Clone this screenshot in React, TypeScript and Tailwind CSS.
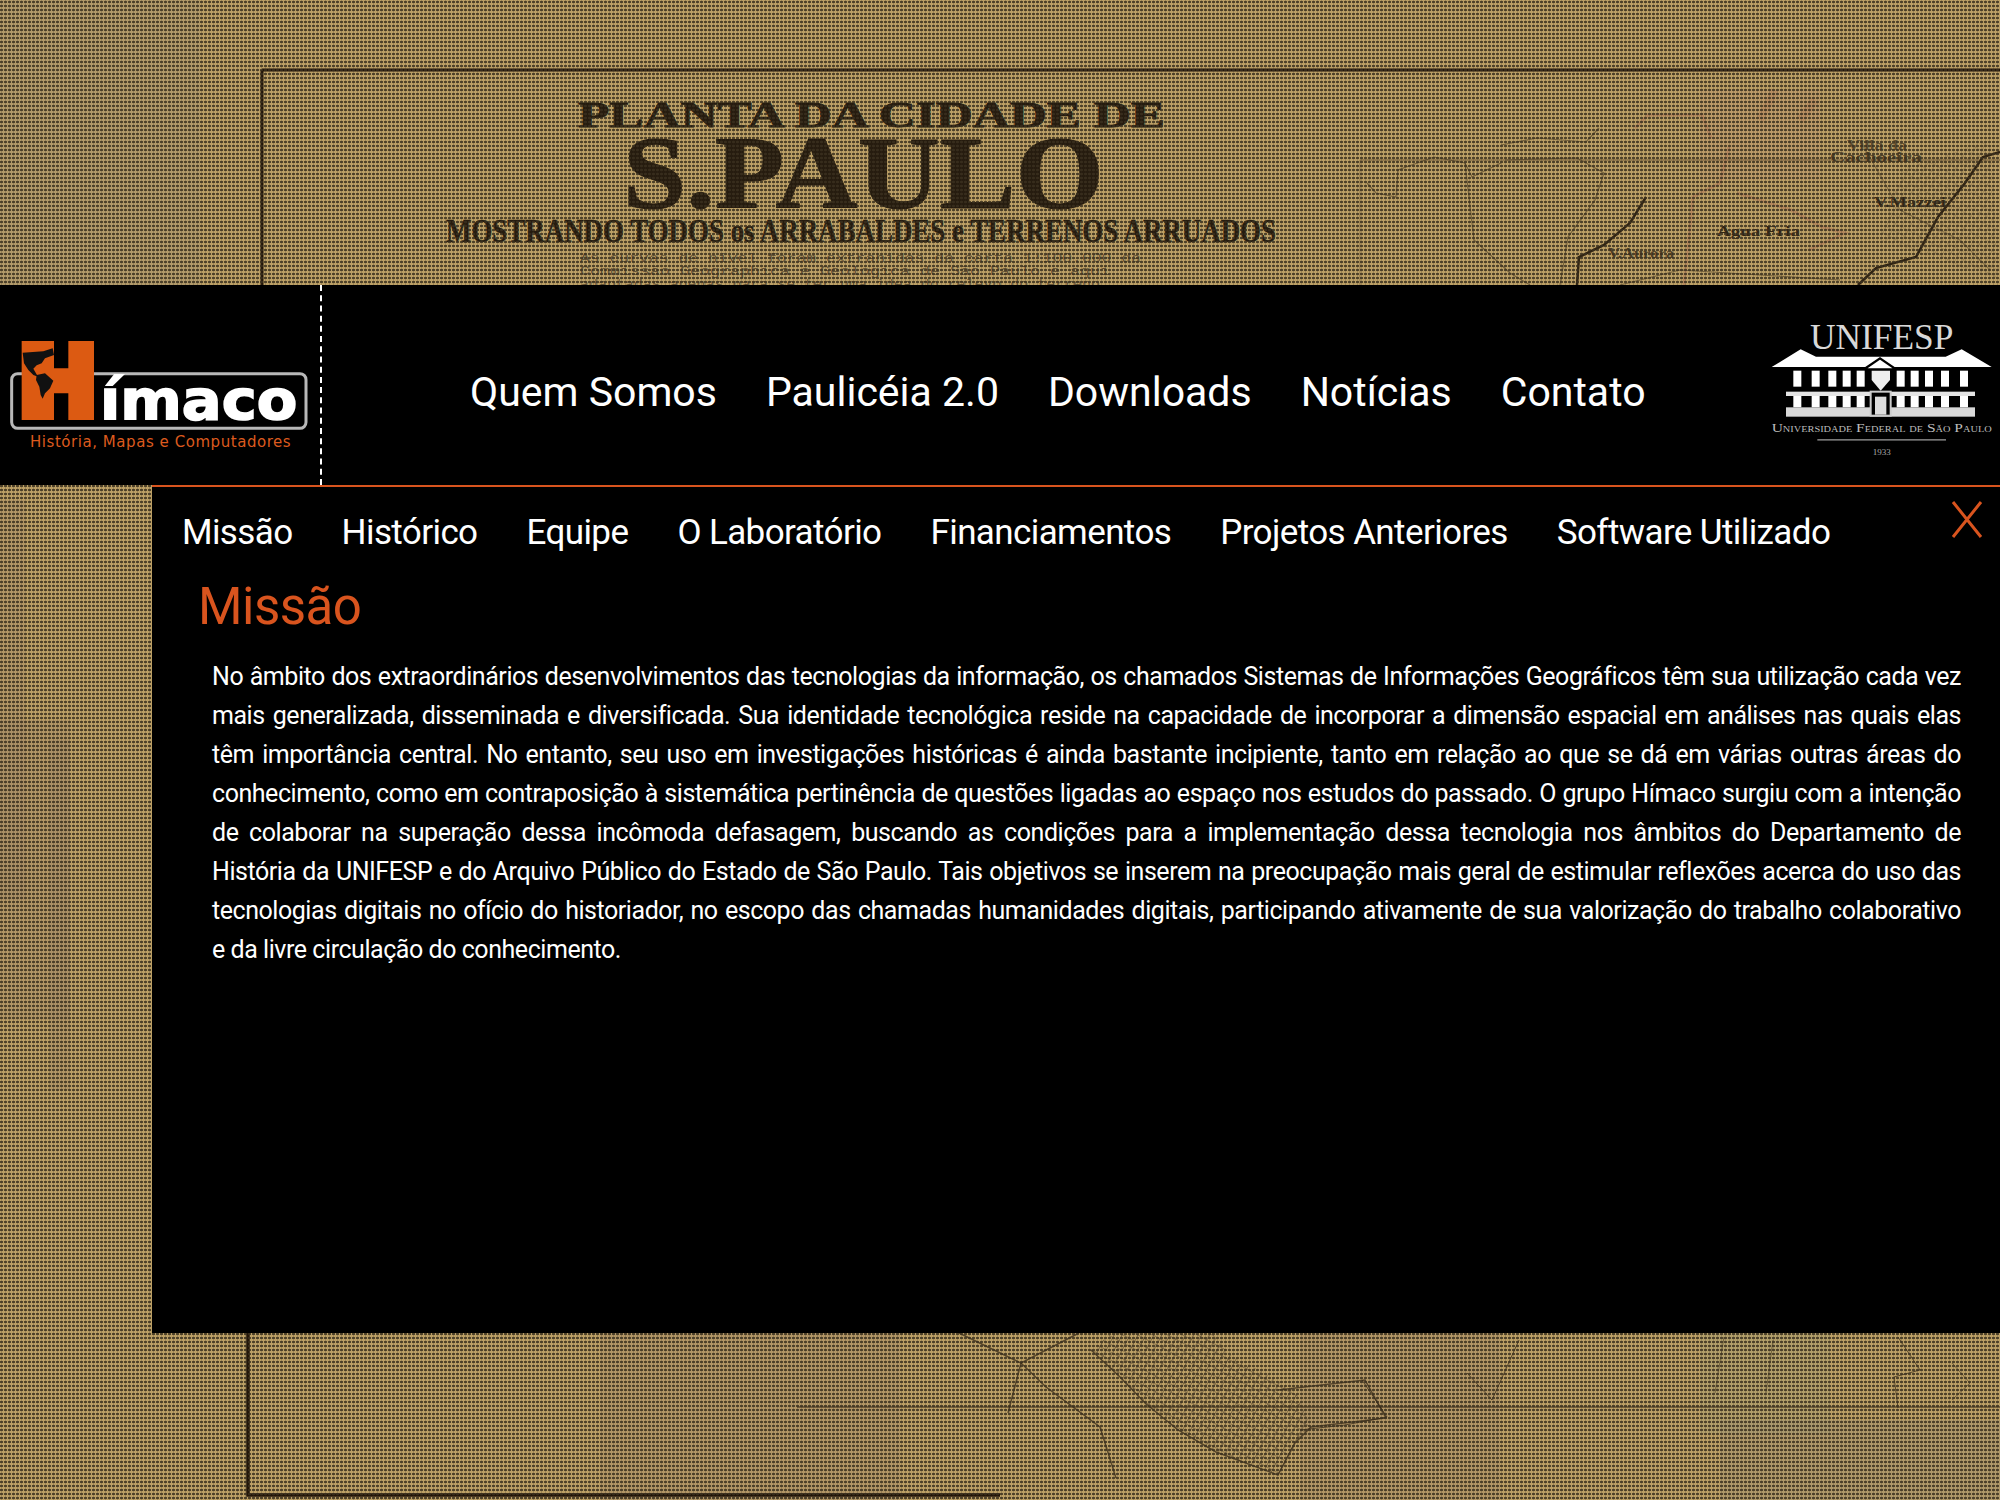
import React from 'react'

const topLinks = ['Quem Somos', 'Paulicéia 2.0', 'Downloads', 'Notícias', 'Contato']
const subLinks = ['Missão', 'Histórico', 'Equipe', 'O Laboratório', 'Financiamentos', 'Projetos Anteriores', 'Software Utilizado']

const lines = [
  'No âmbito dos extraordinários desenvolvimentos das tecnologias da informação, os chamados Sistemas de Informações Geográficos têm sua utilização cada vez',
  'mais generalizada, disseminada e diversificada. Sua identidade tecnológica reside na capacidade de incorporar a dimensão espacial em análises nas quais elas',
  'têm importância central. No entanto, seu uso em investigações históricas é ainda bastante incipiente, tanto em relação ao que se dá em várias outras áreas do',
  'conhecimento, como em contraposição à sistemática pertinência de questões ligadas ao espaço nos estudos do passado. O grupo Hímaco surgiu com a intenção',
  'de colaborar na superação dessa incômoda defasagem, buscando as condições para a implementação dessa tecnologia nos âmbitos do Departamento de',
  'História da UNIFESP e do Arquivo Público do Estado de São Paulo. Tais objetivos se inserem na preocupação mais geral de estimular reflexões acerca do uso das',
  'tecnologias digitais no ofício do historiador, no escopo das chamadas humanidades digitais, participando ativamente de sua valorização do trabalho colaborativo',
]

const MapBackground = () => (
  <svg className="absolute inset-0" width="2000" height="1500" viewBox="0 0 2000 1500">
    <defs>
      <pattern id="dots" width="4" height="4" patternUnits="userSpaceOnUse">
        <rect x="0" y="0" width="4" height="4" fill="#4a3e2c" fillOpacity="0.1" />
        <rect x="1" y="0" width="1" height="4" fill="#3a2f1e" fillOpacity="0.25" />
        <rect x="0" y="1" width="3" height="2" fill="#3a2f1e" fillOpacity="0.8" />
      </pattern>
      <pattern id="hatch" width="7" height="7" patternUnits="userSpaceOnUse" patternTransform="rotate(28)">
        <path d="M0 0H7M0 0V7" stroke="#3d3020" strokeWidth="1.2" />
      </pattern>
    </defs>
    <rect width="2000" height="1500" fill="#c8aa6c" />

    {/* stains of the old paper */}
    <g fill="#a88c6c" fillOpacity="0.35">
      <rect x="0" y="500" width="25" height="400" />
      <rect x="0" y="720" width="70" height="300" />
      <rect x="50" y="740" width="20" height="350" />
      <rect x="1300" y="1333" width="200" height="167" />
      <rect x="1700" y="1333" width="130" height="100" fill="#a8a878" />
      <rect x="1720" y="1420" width="300" height="80" fill="#a4987c" />
      <rect x="600" y="1333" width="300" height="167" />
      <rect x="0" y="0" width="200" height="285" fill="#a89a78" />
      <rect x="1700" y="90" width="120" height="90" fill="#c89a72" />
    </g>

    {/* frame of the map */}
    <g fill="none" stroke="#1f1206">
      <path d="M262 70H2000" strokeWidth="3" />
      <path d="M262 70V285" strokeWidth="3" />
      <path d="M248 1333V1495H1000" strokeWidth="3.5" />
      <path d="M797 1407H2000" strokeWidth="1.5" strokeOpacity="0.6" />
      <path d="M1360 160H2000" strokeWidth="1" strokeOpacity="0.5" />
      <path d="M1360 160V285" strokeWidth="1" strokeOpacity="0.3" />
    </g>

    {/* title */}
    <g fill="#22180c" stroke="#22180c" fontFamily="'Liberation Serif', serif" fontWeight="700">
      <text x="578" y="127" fontSize="36" strokeWidth="0.8" textLength="587" lengthAdjust="spacingAndGlyphs">PLANTA DA CIDADE DE</text>
      <text x="623" y="208" fontSize="104" strokeWidth="1" textLength="481" lengthAdjust="spacingAndGlyphs">S.PAULO</text>
      <text x="446" y="242" fontSize="33" strokeWidth="0.4" textLength="830" lengthAdjust="spacingAndGlyphs">MOSTRANDO TODOS os ARRABALDES e TERRENOS ARRUADOS</text>
    </g>
    <g fill="#4a3c28" fillOpacity="0.75" fontFamily="'Liberation Mono', monospace" fontSize="13">
      <text x="580" y="262" textLength="561" lengthAdjust="spacingAndGlyphs">As curvas de nivel foram extrahidas da carta 1:100.000 da</text>
      <text x="580" y="275" textLength="530" lengthAdjust="spacingAndGlyphs">Commissão Geographica e Geologica de São Paulo e aqui</text>
      <text x="580" y="288" textLength="520" lengthAdjust="spacingAndGlyphs">adaptadas apenas para se ter uma idea do relevo do terreno</text>
    </g>

    {/* upper right of the map */}
    <g fill="none" stroke="#2e2110">
      <path d="M1577 285L1579 257L1604 245L1630 223L1646 197" strokeWidth="2.5" />
      <path d="M1858 285L1876 268L1916 257L1938 217L1965 183L1983 157L2000 152" strokeWidth="2.5" />
      <g strokeWidth="1.2" strokeOpacity="0.5">
        <path d="M1367 183L1376 193L1396 197L1398 170L1434 157L1465 163L1472 177L1501 163" />
        <path d="M1501 145L1537 138L1586 142L1599 128" />
        <path d="M1505 160L1577 158L1604 173L1595 200L1568 237L1560 285" />
        <path d="M1465 163L1474 240L1510 273L1530 285" />
        <path d="M1620 285L1680 270L1760 275L1840 280" />
        <path d="M1860 140L1900 210L1960 240L1990 270" strokeOpacity="0.35" />
      </g>
      <g strokeWidth="3" stroke="#b97f5c" strokeOpacity="0.6">
        <path d="M1635 128L1648 115L1702 115L1711 138" />
        <path d="M1729 147L1720 183L1693 197L1684 285" />
        <path d="M1737 193L1791 210L1822 227L1845 233L1809 250" />
        <path d="M1760 120L1775 90M1800 120L1815 100" strokeWidth="8" strokeOpacity="0.35" />
      </g>
    </g>
    <g fill="#2f2412" fontFamily="'Liberation Serif', serif" fontSize="15" fontWeight="700">
      <text x="1847" y="150" textLength="60" lengthAdjust="spacingAndGlyphs" fillOpacity="0.7">Villa da</text>
      <text x="1830" y="162" textLength="92" lengthAdjust="spacingAndGlyphs" fillOpacity="0.8">Cachoeira</text>
      <text x="1874" y="207" textLength="72" lengthAdjust="spacingAndGlyphs">V.Mazzei</text>
      <text x="1717" y="236" textLength="83" lengthAdjust="spacingAndGlyphs">Agua Fria</text>
      <text x="1608" y="258" textLength="66" lengthAdjust="spacingAndGlyphs" fillOpacity="0.8">V.Aurora</text>
    </g>
    <path d="M1900 170L1990 140L2000 280L1880 240Z" fill="url(#hatch)" fillOpacity="0.3" />

    {/* lower part of the map */}
    <path d="M1091 1350L1120 1377L1145 1403L1178 1430L1216 1452L1278 1475L1295 1443L1311 1427L1295 1390L1228 1353L1212 1333H1112Z" fill="url(#hatch)" fillOpacity="0.75" />
    <g fill="none" stroke="#2e2110" strokeWidth="1.5" strokeOpacity="0.7">
      <path d="M959 1333L1021 1363L1046 1387L1100 1427L1116 1478" />
      <path d="M1079 1333L1021 1363L1008 1413" />
      <path d="M1091 1350L1120 1377L1145 1403L1178 1430L1216 1452L1278 1475L1295 1443L1311 1427L1386 1418L1365 1380L1278 1390" />
      <path d="M1300 1430L1345 1425L1387 1417L1362 1380" strokeWidth="1" />
      <path d="M1467 1373L1492 1400L1519 1340" strokeWidth="1" />
      <path d="M1724 1337L1715 1393M1773 1340L1766 1393" strokeWidth="1" strokeOpacity="0.5" />
      <path d="M1898 1337L1920 1370L1894 1377L1898 1408" strokeWidth="1" />
      <path d="M1952 1363L1970 1383L1952 1400" strokeWidth="1" strokeOpacity="0.5" />
    </g>

    {/* printed dot screen */}
    <rect width="2000" height="1500" fill="url(#dots)" />
  </svg>
)

const HimacoLogo = () => (
  <svg width="320" height="200" viewBox="0 15 960 600" className="shrink-0">
    <rect x="35" y="281" width="883" height="164" rx="18" fill="#000" stroke="#b8b8b8" strokeWidth="9" />
    <path d="M65 183H162V265H205V183H282V420H205V340H162V420H65Z" fill="#dc5a12" />
    <path d="M68 218L130 214L158 205L162 225L135 235L125 250L110 256L100 266L114 290L100 285L85 270L72 250Z" fill="#111" />
    <path d="M110 285L135 280L160 302L150 325L135 340L128 356L122 345L118 320L108 300Z" fill="#111" />
    <text x="300" y="418" fill="#fff" stroke="#fff" strokeWidth="5" fontFamily="'DejaVu Sans', sans-serif" fontWeight="700" fontSize="168" textLength="592" lengthAdjust="spacingAndGlyphs">ímaco</text>
    <text x="90" y="501" fill="#dc5a1e" fontFamily="'DejaVu Sans', sans-serif" fontSize="45" textLength="782">História, Mapas e Computadores</text>
  </svg>
)

const UnifespLogo = () => {
  const bars = [160, 215, 265, 308, 350, 470, 512, 555, 603, 660]
  return (
    <svg width="260" height="180" viewBox="0 0 780 540" className="shrink-0">
      <text x="210" y="178" fill="#d8d8d8" fontFamily="'Liberation Serif', serif" fontSize="105" textLength="430" lengthAdjust="spacingAndGlyphs">UNIFESP</text>
      <path d="M95 231L182 178L228 200H617L665 178L755 231Z" fill="#fff" />
      <path d="M372 238L420 205L468 238Z" fill="#fff" stroke="#000" strokeWidth="7" />
      {bars.map((x) => (
        <rect key={x} x={x} y="242" width="24" height="48" fill="#fff" />
      ))}
      <path d="M395 242H450V270L422 302L395 270Z" fill="#eee" />
      <rect x="138" y="305" width="567" height="13" fill="#e4e4e4" />
      {bars.map((x) => (
        <rect key={x} x={x} y="318" width="24" height="34" fill="#fff" />
      ))}
      <rect x="138" y="352" width="567" height="28" fill="#d8d8d8" />
      <rect x="392" y="305" width="60" height="72" fill="#000" stroke="#ccc" strokeWidth="6" />
      <rect x="405" y="320" width="34" height="54" fill="#ddd" />
      <text x="95" y="426" fill="#bdbdbd" fontFamily="'Liberation Serif', serif" fontSize="36" textLength="660" lengthAdjust="spacingAndGlyphs" style={{ fontVariant: 'small-caps' }}>Universidade Federal de São Paulo</text>
      <rect x="232" y="447" width="386" height="5" fill="#777" />
      <text x="398" y="494" fill="#aaa" fontFamily="'Liberation Serif', serif" fontSize="26" textLength="54" lengthAdjust="spacingAndGlyphs">1933</text>
    </svg>
  )
}

export default function App() {
  return (
    <div className="relative h-[1500px] w-[2000px] overflow-hidden font-['Roboto',sans-serif] text-white">
      <MapBackground />

      <div className="relative pt-[285px]">
        <header className="flex h-[200px] items-start bg-black">
          <div className="h-full border-r-2 border-dashed border-white w-[322px]">
            <HimacoLogo />
          </div>
          <nav className="ml-[148px] mt-[80px] flex gap-[49px] text-[41px] leading-[54px]">
            {topLinks.map((link) => (
              <a key={link}>{link}</a>
            ))}
          </nav>
          <div className="ml-auto mt-[5px]">
            <UnifespLogo />
          </div>
        </header>

        <main className="relative ml-[152px] h-[848px] border-t-2 border-[#d9541e] bg-black">
          <nav className="flex gap-[49px] pl-[30px] pt-[23px] text-[35px] leading-[46px] tracking-[-0.6px]">
            {subLinks.map((link) => (
              <a key={link}>{link}</a>
            ))}
          </nav>
          <svg className="absolute right-[16px] top-[13px]" width="34" height="40" viewBox="0 0 34 40">
            <path d="M3 2L31 37M31 2L3 37" stroke="#d9541e" strokeWidth="3" fill="none" />
          </svg>

          <h1 className="ml-[46px] mt-[18px] text-[51px] leading-[66px] tracking-[-0.5px] text-[#d9541e]">Missão</h1>

          <div className="ml-[60px] mt-[17px] w-[1749px] text-[25px] leading-[39px] tracking-[-0.45px]">
            {lines.map((line) => (
              <p key={line} className="text-justify whitespace-nowrap [text-align-last:justify]">{line}</p>
            ))}
            <p>e da livre circulação do conhecimento.</p>
          </div>
        </main>
      </div>
    </div>
  )
}
